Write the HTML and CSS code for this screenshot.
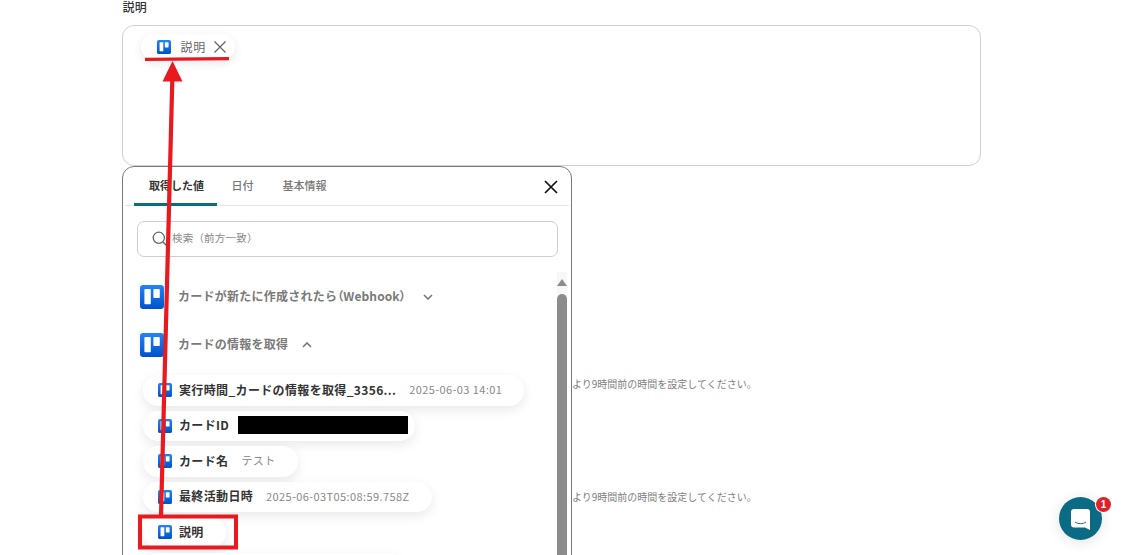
FILE: index.html
```html
<!DOCTYPE html>
<html lang="ja">
<head>
<meta charset="utf-8">
<title>説明</title>
<link rel="stylesheet" href="styles.css">
</head>
<body>
<svg class="defs" width="0" height="0" aria-hidden="true">
  <defs>
    <linearGradient id="tg" x1="0" y1="0" x2="0" y2="1">
      <stop offset="0" stop-color="#1f86f5"/>
      <stop offset="1" stop-color="#0052cc"/>
    </linearGradient>
    <symbol id="trello" viewBox="0 0 24 24">
      <rect width="24" height="24" rx="3.2" fill="url(#tg)"/>
      <rect x="4.4" y="4" width="6.4" height="15.2" rx="0.8" fill="#fff"/>
      <rect x="13.4" y="4" width="6.4" height="9" rx="0.8" fill="#fff"/>
    </symbol>
  </defs>
</svg>

<main class="page">
  <div class="form">
    <div class="label">説明</div>
    <div class="textarea">
      <span class="tag">
        <svg class="ti"><use href="#trello"/></svg>
        <span class="tag-text">説明</span>
        <svg class="tag-x" viewBox="0 0 14 14"><path d="M1.5 1.5l11 11M12.5 1.5l-11 11" stroke="#666" stroke-width="1.3" fill="none"/></svg>
      </span>
    </div>
    <div class="hints">
      <p class="hint">）より9時間前の時間を設定してください。</p>
      <p class="hint">）より9時間前の時間を設定してください。</p>
    </div>
  </div>
</main>

<section class="popup">
  <div class="tabs">
    <div class="tab active">取得した値</div>
    <div class="tab">日付</div>
    <div class="tab">基本情報</div>
    <svg class="close" viewBox="0 0 14 14"><path d="M1 1l12 12M13 1L1 13" stroke="#111" stroke-width="1.7" fill="none"/></svg>
  </div>
  <div class="search">
    <svg class="search-icon" viewBox="0 0 16 16"><circle cx="6.8" cy="6.8" r="5.6" stroke="#666" stroke-width="1.3" fill="none"/><path d="M11 11l4 4" stroke="#666" stroke-width="1.5"/></svg>
    <span class="placeholder">検索（前方一致）</span>
  </div>
  <div class="list-wrap">
    <div class="list">
      <div class="group">
        <svg class="gi"><use href="#trello"/></svg>
        <span class="group-text">カードが新たに作成されたら<span class="paren">（Webhook）</span></span>
        <svg class="chev chev-down" viewBox="0 0 10 6"><path d="M1 1l4 4 4-4" stroke="#777" stroke-width="1.6" fill="none"/></svg>
      </div>
      <div class="group">
        <svg class="gi"><use href="#trello"/></svg>
        <span class="group-text">カードの情報を取得</span>
        <svg class="chev" viewBox="0 0 10 6"><path d="M1 5l4-4 4 4" stroke="#777" stroke-width="1.6" fill="none"/></svg>
      </div>
      <div class="pills">
        <div class="pill"><svg class="ti"><use href="#trello"/></svg><b class="key">実行時間_カードの情報を取得_3356...</b><span class="val">2025-06-03 14:01</span></div>
        <div class="pill pill-tight"><svg class="ti"><use href="#trello"/></svg><b class="key">カードID</b><span class="redact"></span></div>
        <div class="pill"><svg class="ti"><use href="#trello"/></svg><b class="key">カード名</b><span class="val">テスト</span></div>
        <div class="pill"><svg class="ti"><use href="#trello"/></svg><b class="key">最終活動日時</b><span class="val">2025-06-03T05:08:59.758Z</span></div>
        <div class="pill"><svg class="ti"><use href="#trello"/></svg><b class="key">説明</b></div>
        <div class="pill pill-next"></div>
      </div>
    </div>
    <div class="scrollbar">
      <span class="arrow"></span>
      <span class="thumb"></span>
    </div>
  </div>
</section>

<svg class="annotation" width="1123" height="555" viewBox="0 0 1123 555" aria-hidden="true">
  <path d="M145 59.4L229 58.6" stroke="#e8191f" stroke-width="3.4" fill="none"/>
  <path d="M172.5 61L182.5 81.5H162.5Z" fill="#e8191f"/>
  <path d="M172.3 80L161 516" stroke="#e8191f" stroke-width="4.2" fill="none"/>
  <rect x="140" y="516.5" width="96" height="31" stroke="#e8191f" stroke-width="4" fill="none"/>
</svg>

<div class="chat">
  <svg class="chat-icon" viewBox="0 0 19 21"><path d="M3 0h13a3 3 0 0 1 3 3v18l-5-2.4H3a3 3 0 0 1-3-3V3a3 3 0 0 1 3-3z" fill="#fff"/><path d="M4 13c3.300 2.200 7.700 2.200 11 0" stroke="#0b6a84" stroke-width="1" fill="none"/></svg>
  <span class="badge">1</span>
</div>
</body>
</html>
```

FILE: styles.css
```css
* { box-sizing: border-box; }
html, body { margin: 0; height: 555px; overflow: hidden; background: #fff; }
body { font-family: "Noto Sans CJK JP", "Noto Sans", sans-serif; color: #333; position: relative; }
.defs { position: absolute; }
.page { padding-left: 122px; }
.form { width: 859px; }
.label { font-size: 12px; line-height: 14px; height: 25px; font-weight: 500; letter-spacing: .3px; padding-left: .5px; color: #333; }
.textarea { height: 141px; border: 1px solid #cdd0d6; border-radius: 12px; padding: 8px 18px; }
.tag { display: inline-flex; align-items: center; height: 26px; width: 94px; padding-left: 16px; border-radius: 13px; background: #fff; box-shadow: 0 3px 10px rgba(0,0,0,.1); }
.ti { width: 14px; height: 14px; flex: none; }
.tag-text { font-size: 12px; letter-spacing: .7px; color: #666; margin: 0 0 2px 9.500px; }
.tag-x { width: 14px; height: 14px; margin-left: 7px; }
.hints { padding-top: 210px; display: flex; flex-direction: column; gap: 97px; }
.hint { margin: 0; height: 16px; font-size: 10px; line-height: 16px; color: #808080; padding-left: 440px; white-space: nowrap; }

.popup { position: absolute; left: 122px; top: 166px; width: 450px; height: 440px; background: #fff; border: 1px solid #7a7a7a; border-radius: 12px; padding: 0 2px; }
.tabs { display: flex; height: 39px; border-bottom: 1px solid #e3e5e8; padding-left: 9px; position: relative; }
.tab { font-size: 11px; line-height: 37px; height: 39px; padding: 0 14.5px; color: #777; font-weight: 500; }
.tab.active { color: #333; font-weight: 700; border-bottom: 3px solid #0b6a84; padding: 0 15px; width: 83px; white-space: nowrap; }
.close { position: absolute; right: 11px; top: 13px; width: 14px; height: 14px; }
.search { margin: 15px 11px 0 12px; height: 36px; border: 1px solid #ccced2; border-radius: 7px; display: flex; align-items: center; padding-left: 14px; }
.search-icon { width: 16px; height: 16px; flex: none; }
.placeholder { font-size: 10.5px; color: #888; margin: 0 0 3px 4px; letter-spacing: .2px; }
.list-wrap { display: flex; margin-top: 15px; }
.list { width: 431px; }
.group { display: flex; align-items: center; height: 24px; margin: 13px 0 24px 15px; }
.group + .group { margin: 0 0 18px 15px; }
.gi { width: 24px; height: 24px; flex: none; }
.group-text { font-size: 12px; font-weight: 700; color: #7a7a7a; margin: 0 0 3px 14px; letter-spacing: .25px; }
.paren { font-feature-settings: "palt"; letter-spacing: .1px; }
.chev { width: 10px; height: 6px; margin-left: 14px; }
.chev-down { margin-left: 17px; }
.pills { display: flex; flex-direction: column; gap: 5px; align-items: flex-start; padding-left: 18px; }
.pill { display: flex; align-items: center; height: 30.500px; border-radius: 16px; padding: 0 22px 0 15px; background: #fff; box-shadow: 0 4px 12px rgba(0,0,0,.09); white-space: nowrap; }
.pill-tight { padding-right: 7px; }
.pill-next { width: 260px; }
.key { font-size: 12px; font-weight: 700; color: #333; margin: 0 0 2px 7px; letter-spacing: .35px; }
.val { font-size: 11px; color: #888; margin: 0 0 2px 13px; letter-spacing: .4px; }
.redact { width: 170px; height: 18px; background: #000; margin: 0 0 2px 9px; }
.scrollbar { width: 9.500px; margin-left: 1px; background: #f7f7f7; display: flex; flex-direction: column; align-items: center; padding-top: 7px; height: 300px; }
.arrow { width: 0; height: 0; border-left: 5px solid transparent; border-right: 5px solid transparent; border-bottom: 7px solid #8c8c8c; }
.thumb { width: 9.500px; flex: 1; margin-top: 8px; background: #8c8c8c; border-radius: 5px 5px 0 0; }

.annotation { position: absolute; left: 0; top: 0; pointer-events: none; }
.chat { position: absolute; left: 1059px; top: 497px; width: 43px; height: 43px; border-radius: 50%; background: #0b6a84; display: flex; align-items: center; justify-content: center; box-shadow: 0 2px 14px rgba(0,0,0,.12); }
.chat-icon { width: 19px; height: 21px; margin-top: 2px; }
.badge { position: absolute; right: -9px; top: 0; width: 15px; height: 15px; border-radius: 50%; background: #e0202a; color: #fff; font: 700 10px/15px "Liberation Sans", sans-serif; text-align: center; box-shadow: 0 0 0 1px #fff; }
```
